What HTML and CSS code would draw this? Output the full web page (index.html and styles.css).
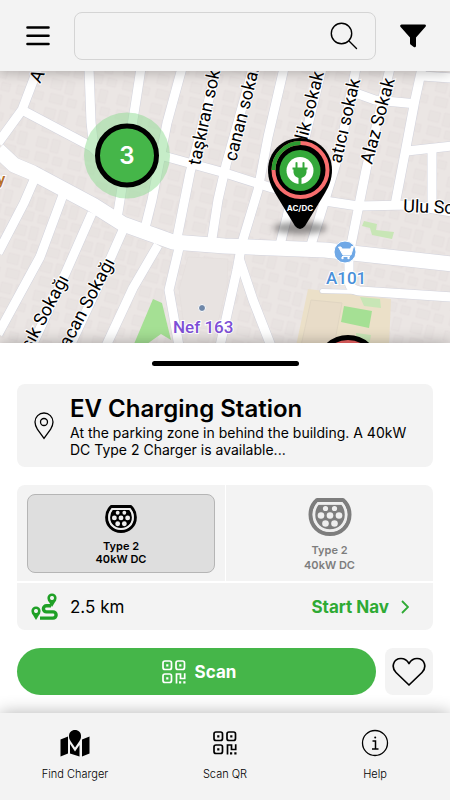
FILE: index.html
```html
<!DOCTYPE html>
<html lang="en">
<head>
    <meta charset="UTF-8">
    <meta name="viewport" content="width=device-width, initial-scale=1.0">
    <title>EV Charging Station</title>
    <link rel="stylesheet" href="styles.css">
</head>
<body>
    <svg width="0" height="0" class="sprite" aria-hidden="true">
        <symbol id="icon-qr" viewBox="0 0 24 24">
            <g fill="none" stroke="currentColor" stroke-width="1.700">
                <rect x="1" y="1" width="8.500" height="8.500" rx="2"/>
                <rect x="14" y="1" width="8.500" height="8.500" rx="2"/>
                <rect x="1" y="14" width="8.500" height="8.500" rx="2"/>
                <path d="M14.500 23.500V14h4v4.500h4.200V13.200"/>
            </g>
            <path fill="currentColor" d="M4.200 4.200h2.200v2.200H4.200zM17.200 4.200h2.200v2.200h-2.200zM4.200 17.200h2.200v2.200H4.200zM17 21.200h2.200v2.200H17zM21.300 21.200h2.200v2.200h-2.200z"/>
        </symbol>
        <symbol id="icon-type2" viewBox="0 0 43 38">
            <path fill="none" stroke="currentColor" stroke-width="4" stroke-linejoin="round" d="M8.500 2h26C38.500 5.500 41 10.500 41 16.500 41 28 32.500 36 21.500 36S2 28 2 16.500C2 10.500 4.500 5.500 8.500 2z"/>
            <path fill="currentColor" d="M10 6.500h23c2.500 2.500 4 6 4 10C37 25.500 30.500 32 21.500 32S6 25.500 6 16.500c0-4 1.500-7.500 4-10z"/>
            <g class="pins">
                <circle cx="17" cy="10.500" r="2.600"/>
                <circle cx="26" cy="10.500" r="2.600"/>
                <circle cx="12.500" cy="17.500" r="3.300"/>
                <circle cx="21.500" cy="17.500" r="3.300"/>
                <circle cx="30.500" cy="17.500" r="3.300"/>
                <circle cx="17" cy="25.500" r="3.300"/>
                <circle cx="26" cy="25.500" r="3.300"/>
            </g>
            <path class="groove" d="M9.500 5.500h24c2.500 3 4 6.500 4 11C37.500 26 30.500 32.500 21.500 32.500S5.500 26 5.500 16.500c0-4.500 1.500-8 4-11z"/>
        </symbol>
    </svg>

    <header class="topbar">
        <button class="icon-btn" type="button" aria-label="Menu">
            <svg width="24" height="22" viewBox="0 0 24 22" stroke="#000" stroke-width="2.600" stroke-linecap="round">
                <path d="M1.500 2.500h21M1.500 10.700h21M1.500 19h21"/>
            </svg>
        </button>
        <div class="search">
            <input type="search" aria-label="Search chargers">
            <button class="search-btn" type="button" aria-label="Search">
                <svg width="28" height="28" viewBox="0 0 28 28" fill="none" stroke="#000" stroke-width="1.400" stroke-linecap="round">
                    <circle cx="11.500" cy="11.500" r="10.200"/>
                    <path d="M19 19l7.500 7.500"/>
                </svg>
            </button>
        </div>
        <button class="icon-btn" type="button" aria-label="Filter">
            <svg width="26" height="24" viewBox="0 0 26 24">
                <path d="M1.500.5h23Q26.500.5 25.700 2.500L16 13.500V22q-.3 2-2.200 1L10.500 20.500q-.5-.5-.5-1.500v-5.500L.4 2.800Q-.4.8 1.500.5z"/>
            </svg>
        </button>
    </header>

    <main class="map">
        <svg class="map-canvas" viewBox="0 71 450 272" preserveAspectRatio="xMidYMid slice" role="img" aria-label="Map of nearby chargers">
            <defs>
                <pattern id="blocks" width="34" height="30" patternUnits="userSpaceOnUse" patternTransform="rotate(14)">
                    <path class="plot" d="M2 3h11v10H2zM17 2h8v13h-8zM4 18h13v9H4zM22 19h9v8h-9z"/>
                </pattern>
                <filter id="soft" x="-30%" y="-80%" width="160%" height="260%">
                    <feGaussianBlur stdDeviation="3"/>
                </filter>
                <g id="roads">
                    <path class="street" d="M38 68L22 110L-2 143"/>
                    <path class="street" d="M22 110L92 147L116 170"/>
                    <path class="street" d="M89 68L91 122L94 150"/>
                    <path class="street" d="M141 68L135 107L120 200L116 225"/>
                    <path class="street" d="M182 68L167 123L152 200L144 232"/>
                    <path class="street" d="M217 68L190 173L176 243"/>
                    <path class="street" d="M253 68L226 165L218 200L211 245"/>
                    <path class="street" d="M284 68L268 137L258 190L242 243L237 270L220 346"/>
                    <path class="street" d="M239 258L253 300L271 346"/>
                    <path class="street" d="M322 68L302 150L287 217L280 245"/>
                    <path class="street" d="M356 68L340 150L324 203L311 245"/>
                    <path class="street" d="M390 68L366 170L358 210L350 250"/>
                    <path class="street" d="M422 68L415 100L405 153L395 205"/>
                    <path class="street" d="M350 91L375 100L417 104"/>
                    <path class="street" d="M422 76L452 78"/>
                    <path class="street" d="M407 151L452 146"/>
                    <path class="street" d="M432 150L432 208"/>
                    <path class="street" d="M160 155L225 173L272 188L325 201L358 206L410 205L452 212"/>
                    <path class="street" d="M349 255L349 280Q349 290 360 291L452 297"/>
                    <path class="lane" d="M322 291L360 292"/>
                    <path class="street" d="M179 248L169 290L179 346"/>
                    <path class="street" d="M158 245L133 288L106 346"/>
                    <path class="street" d="M123 230L100 282L70 346"/>
                    <path class="street" d="M92 213L66 272L32 346"/>
                    <path class="street" d="M63 195L40 257L-2 334"/>
                    <path class="street" d="M34 180L24 203L-2 253"/>
                    <path class="avenue" d="M-2 150L14 165L33 173L93 205L123 224L173 242L225 246L325 250L452 264"/>
                </g>
            </defs>
            <rect class="land" y="60" width="450" height="300"/>
            <rect fill="url(#blocks)" y="60" width="450" height="300"/>
            <path class="block" d="M188 257L228 259L227 285L216 330L184 326L179 289z"/>
            <path class="school" d="M308 289L391 299L389 346L296 346z"/>
            <path class="block-soft" d="M311 300L342 303L334 346L301 346z"/>
            <path class="grass" d="M344 306L372 311L369 328L341 322z"/>
            <path class="grass-light" d="M364 221l13 3-1 6 18 2-2 7-20-4-2-7-8-2zM360 297l20 2 1 9-17-2zM356 333l15 2-2 11h-12z"/>
            <path class="grass" d="M153 299L162 303L171 340L161 334L147 344L134 344z"/>
            <use href="#roads" class="road-edge"/>
            <use href="#roads" class="road-fill"/>

            <g class="street-name">
                <text transform="translate(40 84) rotate(-65)">A</text>
                <text transform="translate(200 166) rotate(-78)">taşkıran sok.</text>
                <text transform="translate(236 162) rotate(-76)">canan sokak</text>
                <text transform="translate(324 73) rotate(-76)" text-anchor="end">çelik sokak</text>
                <text transform="translate(341 164) rotate(-77)">atıcı sokak</text>
                <text transform="translate(372 165) rotate(-75)">Alaz Sokak</text>
                <text transform="translate(69 279) rotate(-62)" text-anchor="end">Işık Sokağı</text>
                <text transform="translate(115 262) rotate(-62)" text-anchor="end">Bacan Sokağı</text>
                <text transform="translate(403 212) rotate(2)">Ulu Sokak</text>
            </g>
            <text class="place cafe" x="-3" y="185">y</text>
            <text class="place nef" x="173" y="333">Nef 163</text>
            <circle class="place-dot" cx="202" cy="308" r="3.500"/>
            <text class="place shop" x="326" y="284">A101</text>
            <circle class="shop-dot" cx="345" cy="252" r="11"/>
            <path class="cart" d="M338.500 247h2.500l1 2h8.500l1-2.500h2l-2.500 8.500h-8zM342 256.500h8"/>
            <circle cx="342.500" cy="258" r="1.200" fill="#fff"/>
            <circle cx="348.500" cy="258" r="1.200" fill="#fff"/>

            <circle class="halo" cx="127" cy="155.500" r="43"/>
            <circle class="cluster" cx="127" cy="155.500" r="29.500"/>
            <text class="cluster-count" x="127" y="164">3</text>

            <circle class="cluster busy" cx="348" cy="367" r="29.500"/>

            <ellipse cx="300" cy="228" rx="27" ry="6" opacity=".4" filter="url(#soft)"/>
            <path d="M300 138c-18 0-32 14-32 32 0 9 3 16 7 23l20 33q5 6 10 0l20-33c4-7 7-14 7-23 0-18-14-32-32-32z"/>
            <circle class="ring ring-busy" cx="300.500" cy="170" r="27"/>
            <path class="ring ring-free" d="M273.500 170A27 27 0 0 1 300.500 143"/>
            <circle cx="300" cy="170.500" r="20.500" fill="#34a83a"/>
            <circle cx="300" cy="170.500" r="13.500" fill="#fff"/>
            <path fill="#34a83a" d="M295.500 162.500q1-1 2 0v5h5v-5q1-1 2 0v5h3v2h-1v3q-.5 4-5 5.500v6.500h-3V178q-4.500-1.500-5-5.500v-3h-1v-2h3z"/>
            <text class="pin-label" x="300" y="211">AC/DC</text>
        </svg>
    </main>

    <section class="sheet">
        <div class="handle"></div>

        <div class="card station">
            <svg class="station-icon" width="20" height="28" viewBox="0 0 20 28" fill="none" stroke="#000" stroke-width="1.300">
                <path d="M10 1C5 1 1 5 1 10c0 3 1 5 2.500 7.500L10 26.500l6.500-9C18 15 19 13 19 10c0-5-4-9-9-9z"/>
                <circle cx="10" cy="10" r="3.500"/>
            </svg>
            <div class="station-info">
                <h1>EV Charging Station</h1>
                <p>At the parking zone in behind the building. A 40kW DC Type 2 Charger is available...</p>
            </div>
        </div>

        <div class="card connectors">
            <div class="connector-row">
                <div class="connector-cell">
                    <button class="connector selected" type="button" aria-pressed="true">
                        <svg width="32" height="28"><use href="#icon-type2"/></svg>
                        <span>Type 2<br>40kW DC</span>
                    </button>
                </div>
                <div class="connector-cell">
                    <button class="connector" type="button" aria-pressed="false">
                        <svg width="44" height="38"><use href="#icon-type2"/></svg>
                        <span>Type 2<br>40kW DC</span>
                    </button>
                </div>
            </div>
            <div class="distance-row">
                <svg width="27" height="27" viewBox="0 0 27 27" fill="none" stroke="#1fa026">
                    <circle cx="21" cy="5" r="3.200" stroke-width="2.800"/>
                    <path fill="#1fa026" stroke="none" d="M16.700 7h8.600l-4.300 7z"/>
                    <circle cx="21" cy="5" r="1.900" fill="#f3f3f3" stroke="none"/>
                    <circle cx="5" cy="18" r="3.200" stroke-width="2.800"/>
                    <path fill="#1fa026" stroke="none" d="M.7 20h8.600L5 27z"/>
                    <circle cx="5" cy="18" r="1.900" fill="#f3f3f3" stroke="none"/>
                    <path stroke-width="3.400" d="M20 12.700h-4.500a3.100 3.100 0 0 0 0 6.200H22a3.100 3.100 0 0 1 0 6.200H9"/>
                </svg>
                <span class="distance">2.5 km</span>
                <a class="nav-link" href="#nav">Start Nav
                    <svg width="8" height="14" viewBox="0 0 8 14" fill="none" stroke="#2eaa34" stroke-width="1.800">
                        <path d="M1 1l6 6-6 6"/>
                    </svg>
                </a>
            </div>
        </div>

        <div class="actions">
            <button class="scan-btn" type="button">
                <svg width="24" height="24"><use href="#icon-qr"/></svg>
                Scan
            </button>
            <button class="fav-btn" type="button" aria-label="Add to favourites">
                <svg width="34" height="29" viewBox="0 0 34 29" fill="none" stroke="#000" stroke-width="1.700" stroke-linejoin="round">
                    <path d="M17 28L4 15.500C-1 10.500 1 1.500 9 1.500c4 0 6.500 2.500 8 5 1.500-2.500 4-5 8-5 8 0 10 9 5 14z"/>
                </svg>
            </button>
        </div>
    </section>

    <nav class="tabbar">
        <a href="#find">
            <svg width="30" height="28" viewBox="0 0 30 28">
                <path d="M.5 10.500L8 7.500v17L.5 27.500zM10 15l5 7.500 4.500-6.500V27.500L10 24.500zM22 10.500l7.500-3v17l-7.500 3z"/>
                <path d="M15 1c-3.500 0-6 2.500-6 6 0 2 .5 3.500 1.500 5l4.500 6.500 4.500-6.500c1-1.500 1.500-3 1.500-5 0-3.500-2.500-6-6-6z"/>
            </svg>
            Find Charger
        </a>
        <a href="#scan">
            <svg width="24" height="28"><use href="#icon-qr"/></svg>
            Scan QR
        </a>
        <a href="#help">
            <svg width="28" height="28" viewBox="0 0 28 28" fill="none" stroke="#000">
                <circle cx="14" cy="14" r="12.500" stroke-width="1.300"/>
                <path stroke-width="1.500" d="M11.500 12h3v8M11 20h6.500"/>
                <circle cx="14.200" cy="8.500" r="1" fill="#000" stroke="none"/>
            </svg>
            Help
        </a>
    </nav>
</body>
</html>
```

FILE: styles.css
```css
:root {
    --green: #45b649;
    --green-dark: #2eaa34;
    --panel: #f3f3f3;
    --street: #fff;
}

* {
    margin: 0;
    padding: 0;
    box-sizing: border-box;
}

body {
    font-family: Inter, "Liberation Sans", sans-serif;
    color: #000;
    background: #fff;
    min-height: 100vh;
    display: flex;
    flex-direction: column;
}

button {
    font: inherit;
    color: inherit;
    background: none;
    border: 0;
    cursor: pointer;
}

a {
    color: inherit;
    text-decoration: none;
}

svg {
    display: block;
    flex-shrink: 0;
}

.sprite {
    position: absolute;
}

/* Top bar */
.topbar {
    display: flex;
    align-items: center;
    gap: 23px;
    padding: 12px 23px 11px 25px;
    background: var(--panel);
    box-shadow: 0 2px 12px rgba(0, 0, 0, 0.25);
    z-index: 1;
}

.icon-btn {
    display: flex;
    padding: 0 1px;
}

.search {
    flex: 1;
    min-width: 0;
    display: flex;
    align-items: center;
    height: 48px;
    padding-right: 17px;
    border: 1px solid #d4d4d4;
    border-radius: 8px;
}

.search input {
    flex: 1;
    min-width: 0;
    height: 100%;
    padding: 0 14px;
    border: 0;
    outline: 0;
    background: none;
    font: inherit;
}

/* Map */
.map {
    flex: 1;
    min-height: 200px;
    display: grid;
    overflow: hidden;
}

.map-canvas {
    width: 100%;
    height: 100%;
}

.land {
    fill: #ebe6e4;
}

.plot,
.block {
    fill: #e8e3e1;
    stroke: #e2dcda;
    stroke-width: 0.5;
}

.school {
    fill: #ebe0c8;
}

.block-soft {
    fill: #e8dcc8;
    stroke: #e0d5c2;
}

.grass {
    fill: #a5e094;
}

.grass-light {
    fill: #c8e6b6;
}

.road-edge,
.road-fill {
    fill: none;
    stroke-linejoin: round;
}

.road-edge {
    stroke: #d2d3dd;
    --extra: 1px;
}

.road-fill {
    stroke: var(--street);
    --extra: 0px;
}

.street {
    stroke-width: calc(9px + var(--extra));
}

.avenue {
    stroke-width: calc(15px + var(--extra));
}

.lane {
    stroke-width: calc(4px + var(--extra));
    stroke-linecap: round;
}

.street-name,
.place {
    font-family: Roboto, "Noto Sans", sans-serif;
    font-size: 18px;
    paint-order: stroke;
    stroke: #fff;
    stroke-width: 2px;
}

.place {
    font-size: 17px;
    font-weight: 500;
}

.cafe {
    fill: #b5702c;
}

.nef {
    fill: #7d4fd6;
}

.shop {
    fill: #4a90d9;
}

.place-dot {
    fill: #6f87a8;
    stroke: #fff;
}

.shop-dot {
    fill: #6fa8e6;
    stroke: #fff;
}

.cart {
    fill: #fff;
    stroke: #fff;
}

.halo {
    fill: #8edb92;
    opacity: 0.5;
}

.cluster {
    fill: var(--green);
    stroke: #000;
    stroke-width: 5px;
}

.busy {
    fill: #ee6464;
}

.cluster-count {
    fill: #fff;
    font-size: 24px;
    font-weight: 600;
    text-anchor: middle;
}

.ring {
    fill: none;
    stroke-width: 4px;
}

.ring-busy {
    stroke: #f96e6e;
}

.ring-free {
    stroke: #2b9a30;
}

.pin-label {
    fill: #fff;
    font-size: 8px;
    font-weight: 700;
    text-anchor: middle;
}

/* Bottom sheet */
.sheet {
    display: flex;
    flex-direction: column;
    gap: 18px;
    padding: 18px 17px;
    background: #fff;
    box-shadow: 0 0 14px rgba(0, 0, 0, 0.3);
    z-index: 1;
}

.handle {
    align-self: center;
    width: 147px;
    height: 5px;
    border-radius: 3px;
    background: #000;
}

.card {
    background: var(--panel);
    border-radius: 8px;
}

.station {
    display: flex;
    align-items: center;
    gap: 16px;
    padding: 10px 16px 9px 17px;
}

.station h1 {
    font-size: 24px;
    font-weight: 600;
    line-height: 30px;
}

.station p {
    font-size: 14px;
    font-weight: 400;
    line-height: 17px;
}

.connector-row {
    display: grid;
    grid-template-columns: 1fr 1fr;
}

.connector-cell {
    display: flex;
    padding: 9px 10px 8px;
    border-bottom: 2px solid #fff;
}

.connector-cell + .connector-cell {
    border-left: 1px solid #fff;
}

.connector {
    flex: 1;
    display: flex;
    flex-direction: column;
    align-items: center;
    justify-content: center;
    gap: 7px;
    height: 79px;
    padding-top: 3px;
    color: #7d7d7d;
    font-size: 11px;
    font-weight: 600;
    line-height: 15px;
}

.connector.selected {
    color: #000;
    background: #dedede;
    border: 1px solid #b5b5b5;
    border-radius: 8px;
    line-height: 13px;
}

.pins {
    fill: #eee;
}

.groove {
    fill: none;
    stroke: #eee;
    stroke-width: 2.5;
}

.distance-row {
    display: flex;
    align-items: center;
    gap: 12px;
    padding: 10px 24px 10px 14px;
}

.distance {
    font-size: 17px;
    font-weight: 400;
}

.nav-link {
    display: flex;
    align-items: center;
    gap: 12px;
    margin-left: auto;
    color: var(--green-dark);
    font-size: 17px;
    font-weight: 700;
}

.actions {
    display: flex;
    gap: 9px;
}

.scan-btn {
    flex: 1;
    display: flex;
    align-items: center;
    justify-content: center;
    gap: 9px;
    height: 47px;
    padding-left: 5px;
    border-radius: 24px;
    background: var(--green);
    color: #fff;
    font-size: 17px;
    font-weight: 700;
}

.fav-btn {
    display: flex;
    align-items: center;
    justify-content: center;
    width: 48px;
    border-radius: 8px;
    background: var(--panel);
}

/* Tab bar */
.tabbar {
    display: grid;
    grid-template-columns: repeat(3, 1fr);
    padding: 16px 0 18px;
    background: var(--panel);
    box-shadow: 0 0 16px rgba(0, 0, 0, 0.3);
    z-index: 2;
}

.tabbar a {
    display: flex;
    flex-direction: column;
    align-items: center;
    gap: 10px;
    font-size: 11px;
    font-weight: 300;
    line-height: 15px;
}
```
